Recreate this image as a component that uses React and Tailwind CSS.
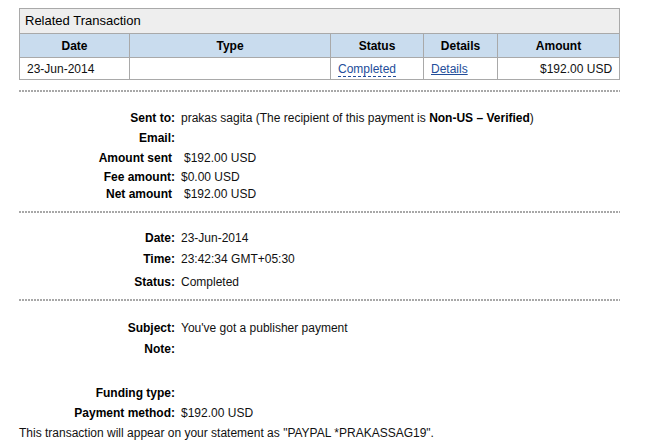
import React from 'react';

const dots =
  'h-[2px] w-[601px] ml-[19px] bg-[linear-gradient(to_right,#a8a8a8_2px,transparent_2px)] bg-[length:3px_2px] bg-repeat-x';

// label / value row of the payment details
const Row = ({ label, children, className = '', labelPad = '', valuePad = 'ml-[6px]' }) => (
  <div className={`flex leading-[16px] ${className}`}>
    <div className={`w-[175px] shrink-0 text-right font-bold text-black ${labelPad}`}>{label}</div>
    <div className={`text-[#111] ${valuePad}`}>{children}</div>
  </div>
);

export default function App() {
  return (
    <div className="min-h-[443px] w-[657px] bg-white pt-[8px] font-['Liberation_Sans',Arial,sans-serif] text-[12px] text-[#111]">
      {/* ===== RELATED TRANSACTION ===== */}
      <table className="ml-[19px] w-[600px] table-fixed border-collapse">
        <colgroup>
          <col className="w-[110px]" />
          <col className="w-[201px]" />
          <col className="w-[93px]" />
          <col className="w-[74px]" />
          <col className="w-[122px]" />
        </colgroup>
        <thead>
          <tr>
            <th colSpan={5} className="h-[25px] border border-[#a9a9a9] bg-[#eeeeee] pl-[5px] text-left text-[13px] font-normal text-black">
              Related Transaction
            </th>
          </tr>
          <tr className="h-[24px] bg-[#c9dcee] text-black">
            <th className="border border-[#a9a9a9] font-bold">Date</th>
            <th className="border border-[#a9a9a9] font-bold">Type</th>
            <th className="border border-[#a9a9a9] font-bold">Status</th>
            <th className="border border-[#a9a9a9] font-bold">Details</th>
            <th className="border border-[#a9a9a9] font-bold">Amount</th>
          </tr>
        </thead>
        <tbody>
          <tr className="h-[22px]">
            <td className="border border-[#a9a9a9] pl-[7px]">23-Jun-2014</td>
            <td className="border border-[#a9a9a9]"></td>
            <td className="border border-[#a9a9a9] pl-[7px]">
              <span className="border-b border-dashed border-[#234d9a] leading-[13px] text-[#234d9a]">Completed</span>
            </td>
            <td className="border border-[#a9a9a9] pl-[7px]">
              <span className="text-[#234d9a] underline">Details</span>
            </td>
            <td className="border border-[#a9a9a9] pr-[7px] text-right">$192.00 USD</td>
          </tr>
        </tbody>
      </table>

      <div className={`${dots} mt-[10px]`} />

      {/* ===== SENT ===== */}
      <Row label="Sent to:" className="mt-[18px]">
        prakas sagita (The recipient of this payment is <b className="text-black">Non-US – Verified</b>)
      </Row>
      <Row label="Email:" className="mt-[4px]" />
      <Row label="Amount sent" className="mt-[4px]" labelPad="pr-[3px]" valuePad="ml-[9px]">
        $192.00 USD
      </Row>
      <Row label="Fee amount:" className="mt-[3px]">$0.00 USD</Row>
      <Row label="Net amount" className="mt-[1px]" labelPad="pr-[3px]" valuePad="ml-[9px]">
        $192.00 USD
      </Row>

      <div className={`${dots} mt-[9px]`} />

      {/* ===== DATE ===== */}
      <Row label="Date:" className="mt-[17px]">23-Jun-2014</Row>
      <Row label="Time:" className="mt-[5px]">23:42:34 GMT+05:30</Row>
      <Row label="Status:" className="mt-[7px]">Completed</Row>

      <div className={`${dots} mt-[9px]`} />

      {/* ===== SUBJECT / FUNDING ===== */}
      <Row label="Subject:" className="mt-[19px]">You've got a publisher payment</Row>
      <Row label="Note:" className="mt-[5px]" />
      <Row label="Funding type:" className="mt-[28px]" />
      <Row label="Payment method:" className="mt-[4px]">$192.00 USD</Row>
      <div className="ml-[19px] mt-[4px] leading-[16px] text-[#111]">
        This transaction will appear on your statement as "PAYPAL *PRAKASSAG19".
      </div>
    </div>
  );
}
